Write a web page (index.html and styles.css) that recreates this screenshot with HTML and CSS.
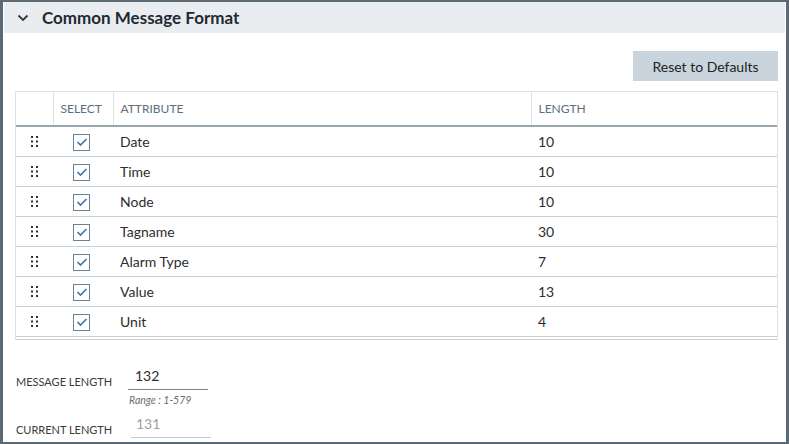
FILE: index.html
```html
<!DOCTYPE html>
<html lang="en">
<head>
    <meta charset="UTF-8">
    <title>Common Message Format</title>
    <link rel="stylesheet" href="styles.css">
</head>
<body>
    <div class="panel">
        <div class="panel-header">
            <svg class="chevron" width="12" height="8" viewBox="0 0 12 8">
                <path d="M1.5 1.5 L6 6 L10.5 1.5" fill="none" stroke="#2b3840" stroke-width="1.8"/>
            </svg>
            <h2>Common Message Format</h2>
        </div>

        <div class="panel-body">
            <div class="toolbar">
                <button class="button">Reset to Defaults</button>
            </div>

            <div class="grid">
                <table>
                    <thead>
                        <tr>
                            <th class="col-drag"></th>
                            <th class="col-select">SELECT</th>
                            <th class="col-attr">ATTRIBUTE</th>
                            <th class="col-len">LENGTH</th>
                        </tr>
                    </thead>
                    <tbody id="rows"></tbody>
                </table>
            </div>

            <div class="fields">
                <div class="field">
                    <label>MESSAGE LENGTH</label>
                    <div class="field-input">
                        <div class="value">132</div>
                        <div class="hint">Range : 1-579</div>
                    </div>
                </div>
                <div class="field disabled">
                    <label>CURRENT LENGTH</label>
                    <div class="field-input">
                        <div class="value">131</div>
                    </div>
                </div>
            </div>
        </div>
    </div>

    <script>
        const attributes = [
            ["Date", 10],
            ["Time", 10],
            ["Node", 10],
            ["Tagname", 30],
            ["Alarm Type", 7],
            ["Value", 13],
            ["Unit", 4]
        ];

        const dots = '<svg width="7" height="11" viewBox="0 0 7 11">' +
            '<rect x="0" y="0" width="2" height="2"/><rect x="5" y="0" width="2" height="2"/>' +
            '<rect x="0" y="4.5" width="2" height="2"/><rect x="5" y="4.5" width="2" height="2"/>' +
            '<rect x="0" y="9" width="2" height="2"/><rect x="5" y="9" width="2" height="2"/></svg>';

        const check = '<span class="checkbox"><svg width="12" height="10" viewBox="0 0 12 10">' +
            '<path d="M1.5 5 L4.5 8 L10.5 2" fill="none" stroke="#3b78ae" stroke-width="1.6"/></svg></span>';

        const tbody = document.getElementById("rows");
        attributes.forEach(a => {
            const tr = document.createElement("tr");
            tr.innerHTML = `<td class="col-drag">${dots}</td><td class="col-select">${check}</td>` +
                `<td class="col-attr">${a[0]}</td><td class="col-len">${a[1]}</td>`;
            tbody.appendChild(tr);
        });
    </script>
</body>
</html>
```

FILE: styles.css
```css
* {
    margin: 0;
    padding: 0;
    box-sizing: border-box;
}

body {
    font-family: 'Lato', 'Liberation Sans', sans-serif;
    background: #fff;
    color: #2d2d2d;
    width: 789px;
    height: 444px;
    overflow: hidden;
}

.panel {
    width: 789px;
    height: 444px;
    border: 2px solid #5c6a73;
    border-left-width: 3px;
    border-right-width: 3px;
    background: #fff;
    overflow: hidden;
}

.panel-header {
    height: 31px;
    margin: 0 1px;
    background-color: #e9edf0;
    display: flex;
    align-items: center;
    padding-left: 13px;
}

.chevron {
    margin-right: 13px;
    margin-top: 1px;
}

.panel-header h2 {
    font-size: 17px;
    font-weight: bold;
    color: #1f2a30;
}

.panel-body {
    padding: 18px 8px 0 12px;
}

.toolbar {
    display: flex;
    justify-content: flex-end;
    margin-bottom: 10px;
}

.button {
    width: 145px;
    height: 30px;
    background-color: #c9d4dc;
    border: none;
    font-family: inherit;
    font-size: 14px;
    color: #222;
}

.grid {
    border: 1px solid #dde2e5;
    border-bottom: 1px solid #c9d0d4;
    padding-bottom: 2px;
}

table {
    width: 100%;
    border-collapse: collapse;
    table-layout: fixed;
}

th {
    height: 34px;
    font-size: 12px;
    font-weight: normal;
    color: #5e6e7a;
    text-align: left;
    padding-left: 7px;
    border-bottom: 2px solid #9aa6ad;
    border-left: 1px solid #dde2e5;
}

th:first-child {
    border-left: none;
}

td {
    height: 30px;
    font-size: 14px;
    color: #2d2d2d;
    padding-left: 7px;
    border-bottom: 1px solid #c7cfd4;
}

.col-drag {
    width: 37px;
    text-align: center;
    padding-left: 0;
}

td.col-drag svg {
    fill: #2a3238;
    display: block;
    margin: 1px 0 0 15px;
}

.col-select {
    width: 60px;
}

td.col-select {
    padding-left: 20px;
}

.col-len {
    width: 246px;
}

.checkbox {
    display: flex;
    align-items: center;
    justify-content: center;
    width: 17px;
    height: 17px;
    border: 1px solid #6a8293;
    margin-top: 2px;
}

.fields {
    margin-top: 27px;
    display: flex;
    flex-direction: column;
    gap: 8px;
}

.field {
    display: flex;
    align-items: flex-start;
}

.field label {
    width: 113px;
    padding-left: 1px;
    padding-top: 8px;
    font-size: 11px;
    color: #3a3a3a;
}

.field-input {
    width: 80px;
}

.value {
    height: 23px;
    padding: 0 0 0 7px;
    font-size: 14px;
    color: #2d2d2d;
    border-bottom: 1px solid #7a858c;
}

.hint {
    margin-top: 4px;
    font-size: 10.5px;
    line-height: 13px;
    font-style: italic;
    color: #6d6d6d;
    padding-left: 1px;
}

.disabled .field-input {
    margin-left: 3px;
}

.disabled .value {
    padding-left: 5px;
    color: #a0a0a0;
    border-bottom-color: #c2c8cc;
}
```
